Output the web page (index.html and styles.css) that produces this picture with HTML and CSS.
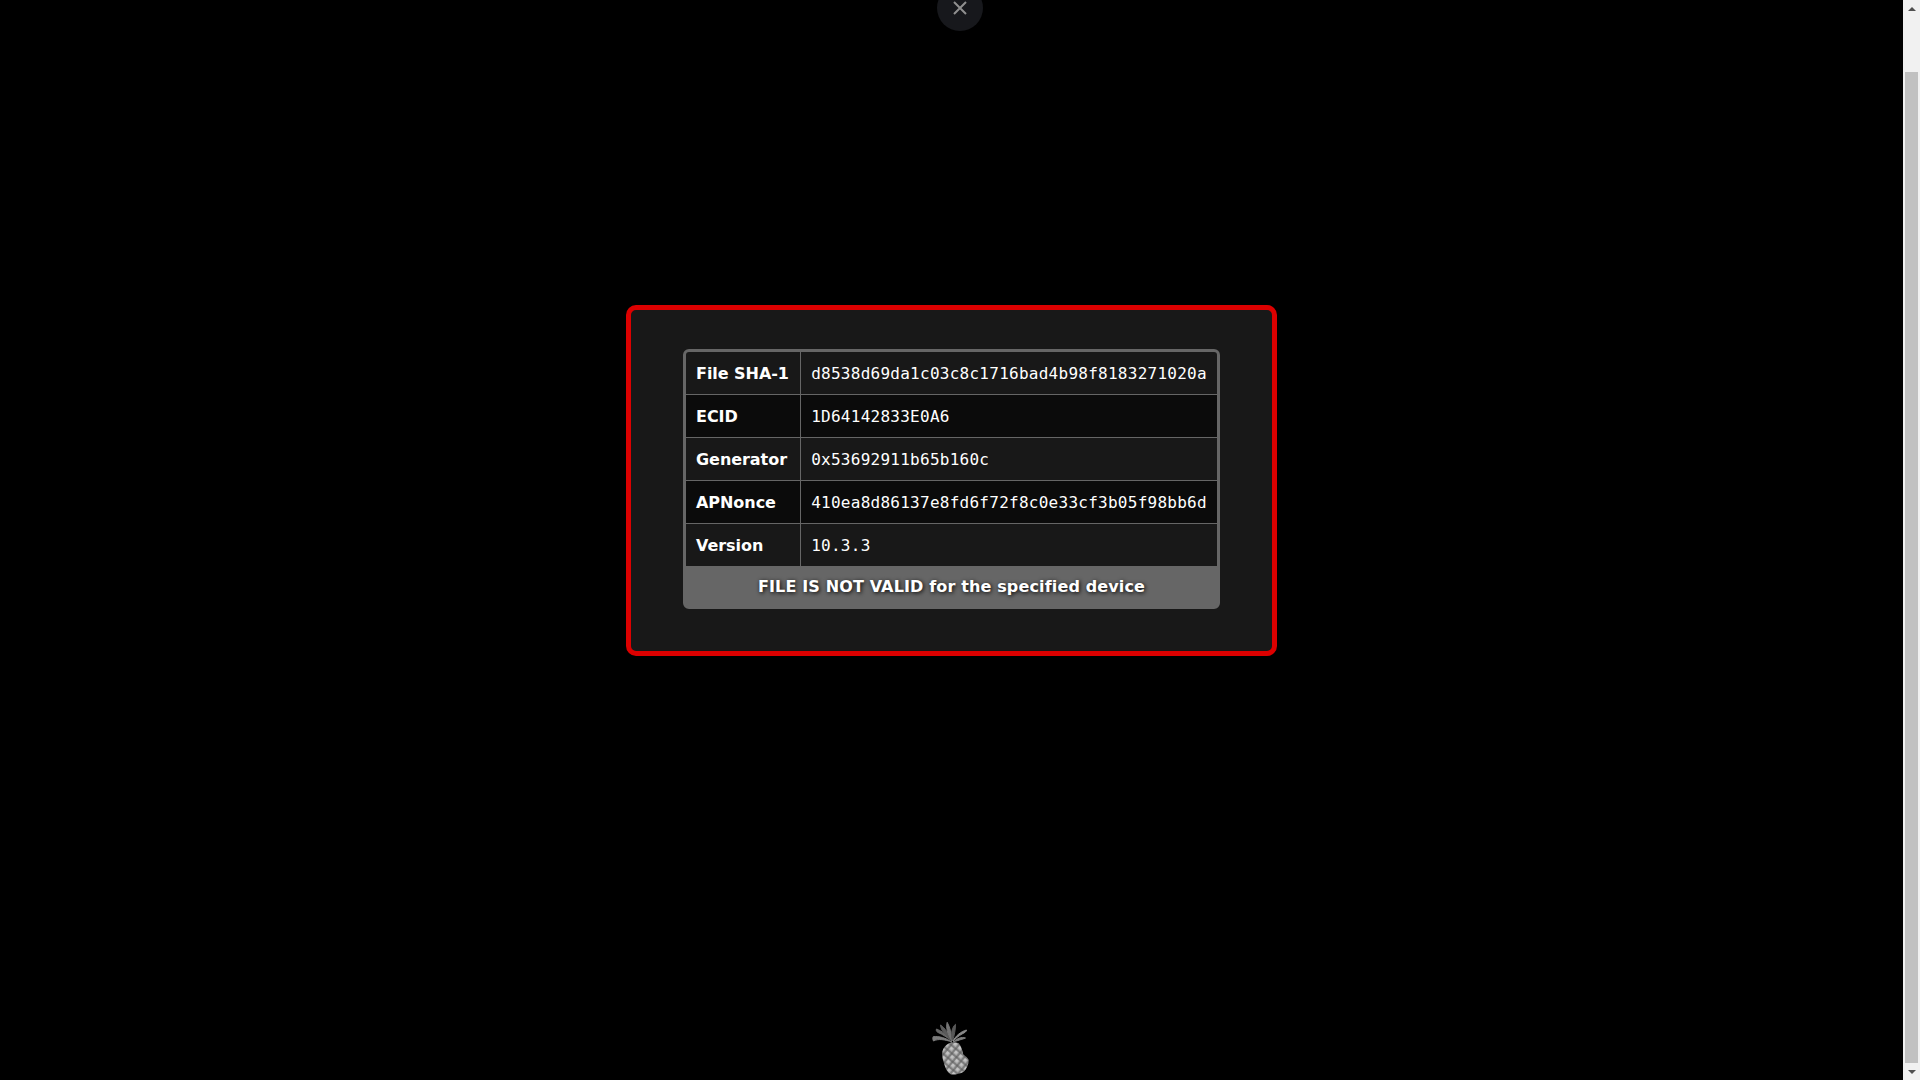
FILE: index.html
```html
<!DOCTYPE html>
<html lang="en">
<head>
<meta charset="utf-8">
<title>SHSH blob check</title>
<link rel="stylesheet" href="styles.css">
</head>
<body>
<div class="app">
  <main class="stage">
    <section class="panel">
      <div class="result">
        <table class="info">
          <tbody>
            <tr><th>File SHA-1</th><td>d8538d69da1c03c8c1716bad4b98f8183271020a</td></tr>
            <tr><th>ECID</th><td>1D64142833E0A6</td></tr>
            <tr><th>Generator</th><td>0x53692911b65b160c</td></tr>
            <tr><th>APNonce</th><td>410ea8d86137e8fd6f72f8c0e33cf3b05f98bb6d</td></tr>
            <tr><th>Version</th><td>10.3.3</td></tr>
          </tbody>
        </table>
        <div class="status">FILE IS NOT VALID for the specified device</div>
      </div>
    </section>
    <footer class="foot">
      <svg class="pineapple" width="40" height="56" viewBox="0 0 40 56" aria-hidden="true">
        <defs>
          <pattern id="scales" width="6" height="6" patternUnits="userSpaceOnUse" patternTransform="rotate(40)">
            <rect width="6" height="6" fill="#555"/>
            <rect x="0.5" y="0.5" width="5" height="5" fill="#a6a6a6"/>
            <rect x="1.2" y="1.2" width="2.6" height="2.6" fill="#c8c8c8"/>
          </pattern>
          <clipPath id="fruit">
            <path d="M16.8 22.3C20 20.8 24 21 26.8 22.3C29 25 30.5 29 31.2 33.3C33 35 35.5 36.5 36.8 39C36.5 44 34.5 48 31.8 50.7C27.5 53 22.5 54 18.5 53.3C15 50.5 13.5 47.5 12.5 44C10.8 39 9.8 35 10.2 30.7C11.5 26.5 14 24 16.8 22.3Z"/>
          </clipPath>
        </defs>
        <g class="crown">
          <path d="M20 21C14 17 7 15 1.2 15.7C0.5 17 0.8 18.5 1.5 20C6 17.5 13 18.5 20 21Z" fill="#7c7c7c" stroke="#7c7c7c"/>
          <path d="M20 20C15 14 10 10 4.5 8C3.8 9.5 4.5 10.5 6 11.5C11 13.5 15 16.5 20 20Z" fill="#666" stroke="#666"/>
          <path d="M20 20C17 13 13 7 8.5 4C8.8 8 11 11 13 13C15.5 15.5 18 18 20 20Z" fill="#5a5a5a" stroke="#5a5a5a"/>
          <path d="M20 20C19.5 13 18 6 15.2 1.3C13.8 6 15 12 20 20Z" fill="#747474" stroke="#747474"/>
          <path d="M20.5 20C22.5 14 23.5 8 23.5 3.3C20 6 18.5 13 20.5 20Z" fill="#585858" stroke="#585858"/>
          <path d="M21 20C24 14.5 29 10.5 34.5 9C34.5 10.5 33 11.5 30 13C26.5 15 23.5 17.5 21 20Z" fill="#8a8a8a" stroke="#8a8a8a"/>
          <path d="M21 21C25 17.5 29.5 15.5 33.5 17C31.5 18 28.5 18.5 26 19.5C24 20 22.5 20.5 21 21Z" fill="#7e7e7e" stroke="#7e7e7e"/>
        </g>
        <rect width="40" height="56" fill="url(#scales)" clip-path="url(#fruit)"/>
      </svg>
    </footer>
  </main>
  <aside class="scrollbar" aria-hidden="true">
    <div class="sb-btn"><span class="arrow-up"></span></div>
    <div class="sb-track"><div class="sb-thumb"></div></div>
    <div class="sb-btn"><span class="arrow-down"></span></div>
  </aside>
  <button class="close" aria-label="Close">
    <svg width="16" height="16" viewBox="0 0 16 16"><path d="M2 2L14 14M14 2L2 14" stroke="#8f8f8f" stroke-width="2" fill="none"/></svg>
  </button>
</div>
</body>
</html>
```
FILE: styles.css
```css
* { box-sizing: border-box; }
html, body { margin: 0; height: 100%; overflow: hidden; background: #000; }
body { font-family: "DejaVu Sans", Verdana, sans-serif; color: #fff; }
.app { display: grid; grid-template-columns: 1fr 17px; height: 1080px; position: relative; }
.stage { display: flex; flex-direction: column; align-items: center; padding-top: 305px; min-width: 0; }
.panel {
  width: 651px; height: 351px; padding: 39px 52px 0;
  background: #181818; border: 5px solid #dc0000; border-radius: 10px;
}
.result { border: 3px solid #666; border-radius: 6px; background: #666; overflow: hidden; }
.info { width: 100%; border-collapse: separate; border-spacing: 0; font-size: 16px; }
.info tr { background: #181818; }
.info tr:nth-child(even) { background: #0b0b0b; }
.info th, .info td { height: 43px; border-bottom: 1px solid #666; white-space: nowrap; }
.info tr:last-child th, .info tr:last-child td { height: 42px; border-bottom: 0; }
.info th { width: 115px; padding: 0 10px; text-align: left; font-weight: 700; letter-spacing: -0.05px; border-right: 1px solid #666; }
.info td { padding: 0 10px 0 10.2px; font-family: "DejaVu Sans Mono", "Liberation Mono", monospace; font-size: 16px; letter-spacing: 0.26px; }
.status {
  height: 40px; line-height: 42px; text-align: center; font-weight: 700; font-size: 16px; letter-spacing: 0.14px;
  text-shadow: 1px 1px 4px #000;
}
.foot { margin-top: auto; height: 59px; display: flex; justify-content: center; }
.pineapple { display: block; }
.crown { filter: blur(0.3px); }
.scrollbar { background: #f1f1f1; display: flex; flex-direction: column; }
.sb-btn { height: 17px; display: flex; align-items: center; justify-content: center; flex: none; }
.arrow-up { border: 4px solid transparent; border-top: 0; border-bottom: 4px solid #505050; }
.arrow-down { border: 4px solid transparent; border-bottom: 0; border-top: 4px solid #505050; }
.sb-track { flex: 1; padding: 55px 2px 0; }
.sb-thumb { height: 991px; background: #c1c1c1; }
.close {
  position: absolute; left: 937px; top: -15px; width: 46px; height: 46px; padding: 0;
  border: 0; border-radius: 50%; background: #17181c;
  display: flex; align-items: center; justify-content: center;
}
```
